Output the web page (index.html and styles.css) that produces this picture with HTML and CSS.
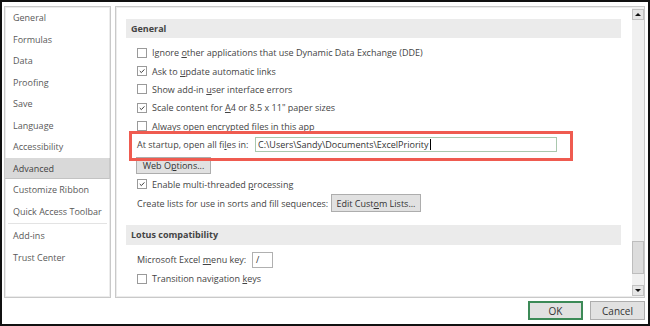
FILE: index.html
```html
<!DOCTYPE html>
<html lang="en">
<head>
    <meta charset="UTF-8">
    <title>Excel Options - Advanced</title>
    <link rel="stylesheet" href="styles.css">
</head>
<body>
    <div class="dialog">
        <div class="panes">
            <nav class="nav">
                <div class="nav-item">General</div>
                <div class="nav-item">Formulas</div>
                <div class="nav-item">Data</div>
                <div class="nav-item">Proofing</div>
                <div class="nav-item">Save</div>
                <div class="nav-item">Language</div>
                <div class="nav-item">Accessibility</div>
                <div class="nav-item active">Advanced</div>
                <div class="nav-item">Customize Ribbon</div>
                <div class="nav-item">Quick Access Toolbar</div>
                <div class="nav-sep"></div>
                <div class="nav-item">Add-ins</div>
                <div class="nav-item">Trust Center</div>
            </nav>
            <section class="options">
                <div class="options-body">
                    <div class="section-head">General</div>
                    <div class="opt first"><span class="box"></span><span>Ignore <u>o</u>ther applications that use Dynamic Data Exchange (DDE)</span></div>
                    <div class="opt"><span class="box checked"><svg viewBox="0 0 10 10"><polyline points="2.2,5 4.2,7 8,3"/></svg></span><span>Ask to <u>u</u>pdate automatic links</span></div>
                    <div class="opt"><span class="box"></span><span>Show add-in <u>u</u>ser interface errors</span></div>
                    <div class="opt"><span class="box checked"><svg viewBox="0 0 10 10"><polyline points="2.2,5 4.2,7 8,3"/></svg></span><span>Scale content for <u>A</u>4 or 8.5 x 11" paper sizes</span></div>
                    <div class="opt"><span class="box"></span><span>Always open encrypted files in this app</span></div>
                    <div class="opt startup">
                        <span class="field-label">At startup, open all fi<u>l</u>es in:</span>
                        <span class="text-input wide">C:\Users\Sandy\Documents\ExcelPriority<span class="caret"></span></span>
                    </div>
                    <div class="btn-row"><button class="btn web-btn">Web O<u>p</u>tions...</button></div>
                    <div class="opt enable"><span class="box checked"><svg viewBox="0 0 10 10"><polyline points="2.2,5 4.2,7 8,3"/></svg></span><span>Enable multi-threaded <u>p</u>rocessing</span></div>
                    <div class="opt lists">
                        <span class="field-label lists-label">Create lists for use in sorts and fill sequences:</span>
                        <button class="btn lists-btn">Edit Cust<u>o</u>m Lists...</button>
                    </div>
                    <div class="section-head lotus">Lotus compatibility</div>
                    <div class="opt menu-key">
                        <span class="field-label key-label">Microsoft Excel <u>m</u>enu key:</span>
                        <span class="text-input small">/</span>
                    </div>
                    <div class="opt"><span class="box"></span><span>Transition navigation <u>k</u>eys</span></div>
                </div>
                <div class="scrollbar">
                    <div class="sb-btn"><span class="arrow up"></span></div>
                    <div class="sb-thumb"></div>
                    <div class="sb-btn down"><span class="arrow dn"></span></div>
                </div>
            </section>
        </div>
        <div class="footer">
            <button class="btn dlg-btn ok">OK</button>
            <button class="btn dlg-btn">Cancel</button>
        </div>
    </div>
</body>
</html>
```

FILE: styles.css
```css
* {
    box-sizing: border-box;
}
body {
    margin: 0;
    width: 650px;
    height: 326px;
    border: 2px solid #111;
    background: #fff;
    font-family: 'Open Sans', 'Noto Sans', sans-serif;
    font-size: 9px;
    color: #444;
    overflow: hidden;
}
u {
    text-decoration: underline;
    text-underline-offset: 1px;
}
.dialog {
    display: flex;
    flex-direction: column;
    height: 100%;
}
.panes {
    display: flex;
    gap: 4px;
    padding: 4px 3px 0 2px;
    height: 296px;
}

/* left navigation */
.nav {
    width: 107px;
    height: 292px;
    border: 1px solid #c9c9c9;
    box-shadow: inset 0 0 0 1px #ececec;
}
.nav-item {
    height: 21.5px;
    line-height: 21.5px;
    padding-left: 8px;
    color: #595959;
    white-space: nowrap;
}
.nav-item.active {
    background: #d9d9d9;
    border-bottom: 1px solid #c3c3c3;
    border-right: 1px solid #c9c9c9;
    color: #444;
}
.nav-sep {
    height: 1px;
    margin: 1px 3px;
    background: #e3e3e3;
}

/* options pane */
.options {
    flex: 1;
    height: 292px;
    border: 1px solid #c9c9c9;
    box-shadow: inset 0 0 0 1px #ececec;
    display: flex;
}
.options-body {
    flex: 1;
    padding: 12px 11px 0 10px;
}
.section-head {
    height: 19px;
    line-height: 19px;
    background: #ebebeb;
    padding-left: 5px;
    font-weight: 700;
    color: #444;
}
.section-head.lotus {
    margin-top: 11.5px;
    height: 20px;
    line-height: 20px;
}
.opt {
    display: flex;
    align-items: center;
    height: 18.4px;
    padding-left: 11px;
    white-space: nowrap;
}
.opt.first {
    margin-top: 5.5px;
}
.box {
    width: 10px;
    height: 10px;
    border: 1px solid #9a9a9a;
    background: #fff;
    margin-right: 5px;
    flex-shrink: 0;
    display: flex;
}
.box svg {
    width: 8px;
    height: 8px;
    fill: none;
    stroke: #333;
    stroke-width: 1.2;
}
.startup {
    position: relative;
    height: 18.5px;
}
/* red highlight drawn over the startup row */
.startup::before {
    content: '';
    position: absolute;
    left: 3px;
    top: -4px;
    width: 438px;
    height: 24px;
    border: 3px solid #ef5b50;
}
.field-label {
    flex-shrink: 0;
}
.startup .field-label {
    width: 118px;
}
.text-input {
    height: 15px;
    line-height: 13px;
    border: 1px solid #b0b0b0;
    background: #fff;
    padding-left: 2px;
    color: #333;
    display: flex;
    align-items: center;
}
.text-input.wide {
    width: 302px;
    border-color: #a9c8ae;
}
.caret {
    width: 1px;
    height: 11px;
    background: #000;
    margin-left: 1px;
}
.btn {
    font-family: inherit;
    font-size: 9px;
    color: #333;
    background: #e1e1e1;
    border: 1px solid #adadad;
    padding: 0;
    cursor: pointer;
}
.btn-row {
    padding-left: 10px;
    margin-top: 3px;
}
.web-btn {
    width: 75px;
    height: 17px;
}
.enable {
    margin-top: 1px;
}
.lists {
    height: 20px;
}
.lists-label {
    width: 194px;
}
.lists-btn {
    width: 90px;
    height: 18px;
}
.menu-key {
    margin-top: 5.5px;
    height: 19px;
}
.key-label {
    width: 115px;
}
.text-input.small {
    width: 21px;
    height: 16px;
    padding-left: 3px;
}

/* scrollbar */
.scrollbar {
    width: 12px;
    background: #f0f0f0;
    display: flex;
    flex-direction: column;
    padding: 2px 0 1px;
}
.sb-btn {
    height: 11px;
    border: 1px solid #c2c2c2;
    background: #e6e6e6;
    display: flex;
    align-items: center;
    justify-content: center;
}
.sb-btn.down {
    margin-top: 11px;
}
.arrow {
    width: 0;
    height: 0;
    border-left: 3px solid transparent;
    border-right: 3px solid transparent;
}
.arrow.up {
    border-bottom: 3px solid #111;
}
.arrow.dn {
    border-top: 3px solid #111;
}
.sb-thumb {
    margin-top: auto;
    height: 33px;
    background: #dcdcdc;
    border: 1px solid #bdbdbd;
}

/* dialog buttons */
.footer {
    display: flex;
    justify-content: flex-end;
    gap: 7px;
    padding: 3px 3px 0 0;
}
.dlg-btn {
    width: 55px;
    height: 19px;
    font-size: 10px;
}
.dlg-btn.ok {
    border: 2px solid #3c8a57;
}
```
